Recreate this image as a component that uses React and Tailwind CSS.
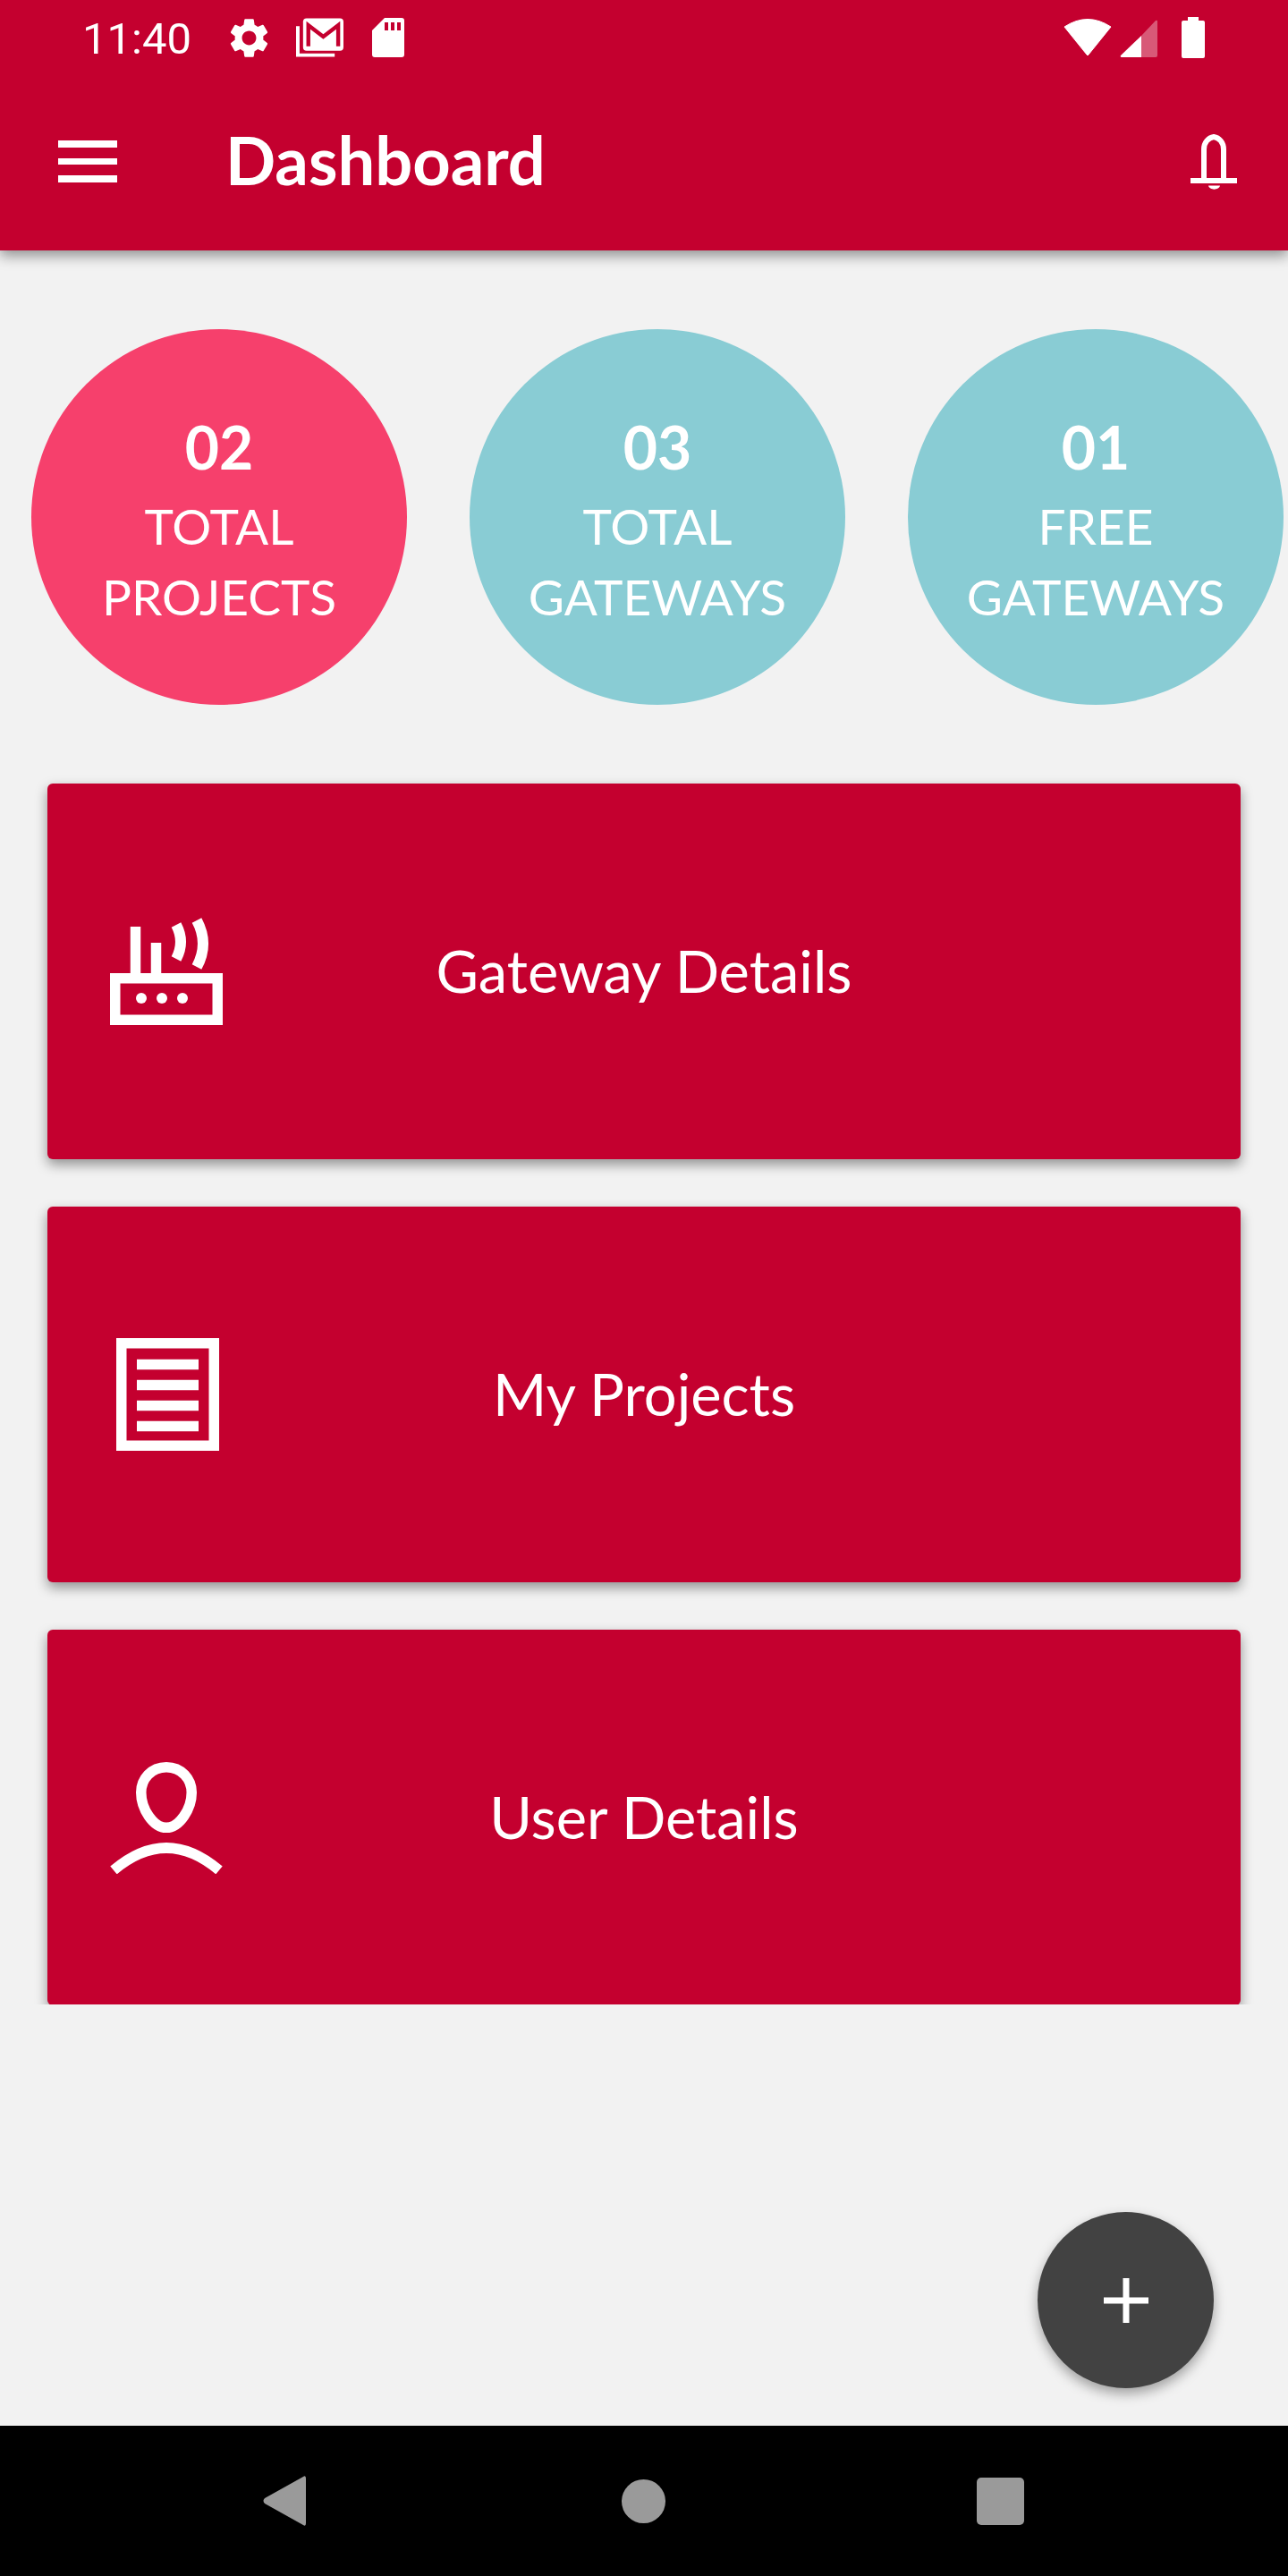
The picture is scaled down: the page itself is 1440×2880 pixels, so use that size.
import { MdSettings } from 'react-icons/md';

const RED = '#c4002f';

function GmailIcon() {
  return (
    <svg width="53" height="45" viewBox="0 0 54 45" className="ml-[26px]">
      <path d="M2 9V42H44" fill="none" stroke="white" strokeWidth="4" />
      <rect x="8" y="0" width="46" height="37" rx="4" fill="white" />
      <path d="M14 32V8L31 21L48 8V32" fill="none" stroke={RED} strokeWidth="4.5" />
    </svg>
  );
}

function SdIcon() {
  return (
    <svg width="36" height="44" viewBox="0 0 36 44" className="ml-[32px]">
      <path d="M14 0H33Q36 0 36 3V41Q36 44 33 44H3Q0 44 0 41V14Z" fill="white" />
      <rect x="14" y="5" width="4" height="9" fill={RED} />
      <rect x="21" y="5" width="4" height="9" fill={RED} />
      <rect x="28" y="5" width="4" height="9" fill={RED} />
    </svg>
  );
}

function WifiIcon() {
  return (
    <svg width="54" height="44" viewBox="0 0 54 44">
      <path d="M1 10Q27 -7 53 10L28 41Q27 43 26 41Z" fill="white" stroke="white" strokeLinejoin="round" />
    </svg>
  );
}

function SignalIcon() {
  return (
    <svg width="42" height="42" viewBox="0 0 42 42" className="ml-[9px] mt-[2px]">
      <path d="M24 18V42H2Q0 42 1 40Z" fill="white" />
      <path d="M24 18L40 1Q42 0 42 2V40Q42 42 40 42H24Z" fill="white" fillOpacity="0.35" />
    </svg>
  );
}

function BatteryIcon() {
  return (
    <svg width="26" height="46" viewBox="0 0 26 46" className="ml-[27px] mr-[93px]">
      <path d="M7 0H19V4H24Q26 4 26 6V44Q26 46 24 46H2Q0 46 0 44V6Q0 4 2 4H7Z" fill="white" />
    </svg>
  );
}

function BellIcon() {
  return (
    <svg width="52" height="63" viewBox="0 0 52 63" className="text-white">
      <path d="M15 49V17C15 9 20 4 26 3C32 4 37 9 37 17V49" fill="none" stroke="white" strokeWidth="6" />
      <rect x="0" y="49" width="52" height="6" fill="white" />
      <path d="M20 57.5H33C32 63 21 63 20 57.5Z" fill="white" />
    </svg>
  );
}

function RouterIcon() {
  return (
    <svg width="126" height="120" viewBox="0 0 126 120" fill="none" stroke="white" strokeWidth="11.5">
      <rect x="5.75" y="67.75" width="114.5" height="46.5" />
      <path d="M28.5 62V10M51.5 62V28" />
      <circle cx="35" cy="90" r="6" fill="white" stroke="none" />
      <circle cx="58" cy="90" r="6" fill="white" stroke="none" />
      <circle cx="81" cy="90" r="6" fill="white" stroke="none" />
      <path d="M74 8Q84 27 74 46" strokeWidth="12" />
      <path d="M97 3Q111 29 97 55" strokeWidth="12" />
    </svg>
  );
}

function ProjectsIcon() {
  return (
    <svg width="126" height="126" viewBox="0 0 126 126" fill="none" stroke="white" strokeWidth="11.5">
      <rect x="12.75" y="5.75" width="103.5" height="114.5" />
      <path d="M30 29.5H99M30 52.5H99M30 75.5H99M30 98.5H99" />
    </svg>
  );
}

function UserIcon() {
  return (
    <svg width="126" height="126" viewBox="0 0 126 126" fill="none" stroke="white" strokeWidth="11.5">
      <path d="M63 6.75C80 6.75 91.25 20 91.25 35C91.25 53 78 74.25 63 74.25C48 74.25 34.75 53 34.75 35C34.75 20 46 6.75 63 6.75Z" />
      <path d="M4 122Q63 72 122 122" />
    </svg>
  );
}

function Stat({ value, first, second, color }) {
  return (
    <div className={`w-[420px] h-[420px] shrink-0 rounded-full flex flex-col items-center pt-[98px] text-white ${color}`}>
      <div className="text-[66px] leading-[68px] font-bold">{value}</div>
      <div className="text-[55px] leading-[79px] mt-[15px] text-center">
        {first}
        <br />
        {second}
      </div>
    </div>
  );
}

function Card({ icon, label }) {
  return (
    <div className="h-[420px] rounded-[6px] bg-[#c4002f] shadow-[0_6px_14px_rgba(0,0,0,0.4)] grid grid-cols-[1fr_auto_1fr] items-center text-white">
      <div className="pl-[70px]">{icon}</div>
      <div className="text-[65px] leading-[80px] pb-[3px]">{label}</div>
      <div />
    </div>
  );
}

export default function App() {
  return (
    <div className="relative w-[1440px] h-[2880px] flex flex-col bg-[#f2f2f2] font-['Lato',sans-serif] overflow-hidden">
      <header className="relative z-10 h-[280px] shrink-0 bg-[#c4002f] text-white shadow-[0_6px_14px_rgba(0,0,0,0.4)]">
        <div className="h-[84px] flex items-center">
          <span className="ml-[92px] font-['Roboto',sans-serif] text-[49px] leading-[60px] mt-[4px]">11:40</span>
          <MdSettings size={53} className="ml-[38px]" />
          <GmailIcon />
          <SdIcon />
          <div className="flex-1" />
          <WifiIcon />
          <SignalIcon />
          <BatteryIcon />
        </div>
        <div className="flex items-center h-[196px] pb-[16px]">
          <div className="ml-[65px] mt-[13px] w-[66px] flex flex-col gap-[12px]">
            <div className="h-[8px] bg-white" />
            <div className="h-[7px] bg-white" />
            <div className="h-[8px] bg-white" />
          </div>
          <h1 className="ml-[121px] mt-[10px] text-[74px] leading-[80px] font-bold">Dashboard</h1>
          <div className="flex-1" />
          <div className="mr-[57px] mt-[15px]">
            <BellIcon />
          </div>
        </div>
      </header>

      <main className="h-[1961px] shrink-0 overflow-hidden pt-[88px]">
        <div className="flex gap-[70px] pl-[35px] mb-[88px]">
          <Stat value="02" first="TOTAL" second="PROJECTS" color="bg-[#f6406c]" />
          <Stat value="03" first="TOTAL" second="GATEWAYS" color="bg-[#89ccd4]" />
          <Stat value="01" first="FREE" second="GATEWAYS" color="bg-[#89ccd4]" />
        </div>
        <div className="mx-[53px] flex flex-col gap-[53px]">
          <Card icon={<RouterIcon />} label="Gateway Details" />
          <Card icon={<ProjectsIcon />} label="My Projects" />
          <Card icon={<UserIcon />} label="User Details" />
        </div>
      </main>

      <div className="flex-1" />

      <button className="absolute right-[83px] bottom-[210px] w-[197px] h-[197px] rounded-full bg-[#424242] shadow-[0_6px_14px_rgba(0,0,0,0.35)] flex items-center justify-center">
        <svg width="50" height="50" viewBox="0 0 50 50">
          <path d="M21.5 0H28.5V21.5H50V28.5H28.5V50H21.5V28.5H0V21.5H21.5Z" fill="white" />
        </svg>
      </button>

      <nav className="h-[168px] shrink-0 bg-black relative flex items-center">
        <svg width="48" height="56" viewBox="0 0 48 56" className="ml-[294px] mt-[-1px]">
          <path d="M45 1Q48 -1 48 3V53Q48 57 45 55L2 31Q-1 28 2 25Z" fill="#9a9a9a" />
        </svg>
        <div className="ml-[353px] w-[49px] h-[49px] rounded-full bg-[#9a9a9a]" />
        <div className="ml-[348px] w-[53px] h-[53px] rounded-[5px] bg-[#9a9a9a]" />
      </nav>
    </div>
  );
}
